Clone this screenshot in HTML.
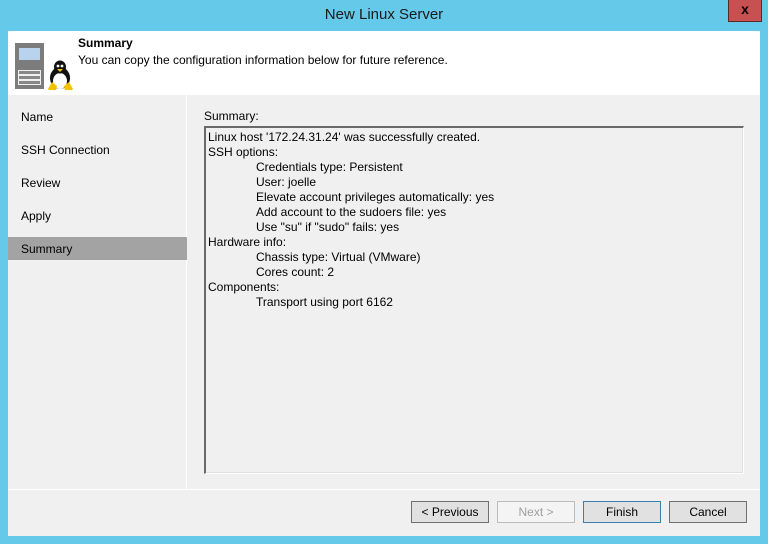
<!DOCTYPE html>
<html><head><style>
*{margin:0;padding:0;box-sizing:border-box}
body{width:768px;height:544px;background:#65c9ea;font-family:"Liberation Sans",sans-serif;font-size:12px;color:#000;position:relative;overflow:hidden}
.abs{position:absolute}
#title{left:0;top:6px;width:768px;text-align:center;font-size:15px;color:#1a1a1a}
#close{left:728px;top:0;width:34px;height:22px;background:#c75050;border:1px solid #5a2a2a;border-top:none;text-align:center;font-weight:bold;font-size:14px;line-height:19px}
#win{left:8px;top:31px;width:752px;height:505px;background:#f0f0f0}
#hdr{left:0;top:0;width:752px;height:64px;background:#fff}
.nav{position:absolute;left:13px;font-size:12px}
.in{padding-left:48px}
</style></head><body>
<div class="abs" id="title">New Linux Server</div>
<div class="abs" id="close">x</div>
<div class="abs" id="win">
 <div class="abs" id="hdr">
  <svg class="abs" style="left:7px;top:12px" width="62" height="48">
   <rect x="0" y="0" width="29" height="46" fill="#7c7c7c"/>
   <rect x="4" y="5" width="21" height="12" fill="#b9d3ee"/>
   <rect x="3.5" y="27.5" width="22" height="4" fill="#888" stroke="#f0f0f0" stroke-width="1"/>
   <rect x="3.5" y="32.5" width="22" height="4" fill="#888" stroke="#f0f0f0" stroke-width="1"/>
   <rect x="3.5" y="37.5" width="22" height="4" fill="#888" stroke="#f0f0f0" stroke-width="1"/>
   <ellipse cx="45" cy="35" rx="10" ry="11" fill="#111"/>
   <ellipse cx="45" cy="38" rx="7" ry="8" fill="#fff"/>
   <ellipse cx="45" cy="24" rx="6" ry="6.5" fill="#111"/>
   <circle cx="43" cy="23" r="1.4" fill="#fff"/><circle cx="47" cy="23" r="1.4" fill="#fff"/>
   <path d="M42 26 L48 26 L45 29Z" fill="#f2c200"/>
   <path d="M33 46 L37 39 L42 43 L41 47 L34 47Z" fill="#f2c200"/>
   <path d="M58 46 L54 39 L49 43 L50 47 L57 47Z" fill="#f2c200"/>
  </svg>
  <div class="abs" style="left:70px;top:5px;font-weight:bold;font-size:12px">Summary</div>
  <div class="abs" style="left:70px;top:22px">You can copy the configuration information below for future reference.</div>
 </div>
 <div class="abs" style="left:178px;top:64px;width:1px;height:394px;background:#fff"></div>
 <div class="abs" style="left:0;top:458px;width:752px;height:1px;background:#fff"></div>
 <div class="nav" style="top:79px">Name</div>
 <div class="nav" style="top:112px">SSH Connection</div>
 <div class="nav" style="top:145px">Review</div>
 <div class="nav" style="top:178px">Apply</div>
 <div class="abs" style="left:0;top:206px;width:179px;height:23px;background:#a3a3a3"></div>
 <div class="nav" style="top:211px">Summary</div>
 <div class="abs" style="left:196px;top:78px">Summary:</div>
 <div class="abs" style="left:196px;top:95px;width:540px;height:348px;border-left:2px solid #6a6a6a;border-top:2px solid #6a6a6a;border-right:1px solid #fff;border-bottom:1px solid #fff;box-shadow:inset -1px -1px 0 #e0e0e0;padding:2px 0 0 2px;line-height:15px;white-space:nowrap">
<div>Linux host '172.24.31.24' was successfully created.</div>
<div>SSH options:</div>
<div class="in">Credentials type: Persistent</div>
<div class="in">User: joelle</div>
<div class="in">Elevate account privileges automatically: yes</div>
<div class="in">Add account to the sudoers file: yes</div>
<div class="in">Use "su" if "sudo" fails: yes</div>
<div>Hardware info:</div>
<div class="in">Chassis type: Virtual (VMware)</div>
<div class="in">Cores count: 2</div>
<div>Components:</div>
<div class="in">Transport using port 6162</div>
 </div>
 <div class="abs" style="left:403px;top:470px;width:78px;height:22px;background:#e1e1e1;border:1px solid #707070;text-align:center;line-height:20px">&lt; Previous</div>
 <div class="abs" style="left:489px;top:470px;width:78px;height:22px;background:#f4f4f4;border:1px solid #bcbcbc;color:#a0a0a0;text-align:center;line-height:20px">Next &gt;</div>
 <div class="abs" style="left:575px;top:470px;width:78px;height:22px;background:#e1e1e1;border:1px solid #3c7fb1;text-align:center;line-height:20px">Finish</div>
 <div class="abs" style="left:661px;top:470px;width:78px;height:22px;background:#e1e1e1;border:1px solid #707070;text-align:center;line-height:20px">Cancel</div>
</div>
</body></html>
